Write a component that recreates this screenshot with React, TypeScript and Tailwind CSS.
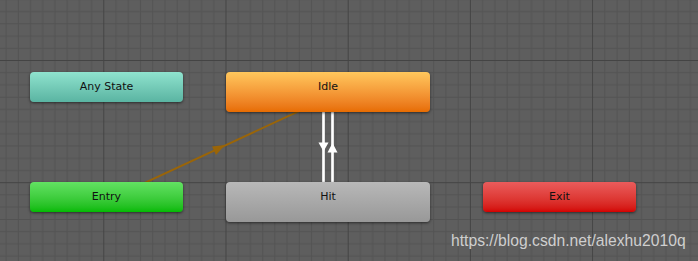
import React from 'react';

interface StateNode {
    name: string;
    left: string;
    top: string;
    size: string;
    colors: string;
}

const nodes: StateNode[] = [
    { name: 'Any State', left: 'left-[30px]', top: 'top-[72px]', size: 'w-[153px] h-[30px]', colors: 'from-[#8fe3ce] to-[#5ab4a2]' },
    { name: 'Idle', left: 'left-[226px]', top: 'top-[72px]', size: 'w-[204px] h-[40px]', colors: 'from-[#ffc75c] to-[#e76c00]' },
    { name: 'Entry', left: 'left-[30px]', top: 'top-[182px]', size: 'w-[153px] h-[30px]', colors: 'from-[#62e262] to-[#00ba00]' },
    { name: 'Hit', left: 'left-[226px]', top: 'top-[182px]', size: 'w-[204px] h-[40px]', colors: 'from-[#b8b8b8] to-[#989898]' },
    { name: 'Exit', left: 'left-[483px]', top: 'top-[182px]', size: 'w-[153px] h-[30px]', colors: 'from-[#ea5b5b] to-[#d30000]' },
];

// background grid + transition arrows
const Graph = () => {
    const minor = [];
    for (let i = 0; i < 10; i++) minor.push(i * 12.22);
    return (
        <svg width="698" height="261" className="absolute inset-0">
            <defs>
                <pattern id="grid" patternUnits="userSpaceOnUse" width="122.2" height="122.2" x="-18.9" y="-62.2">
                    {minor.map((p, i) => (
                        <g key={i}>
                            <line x1={p + 0.5} y1="0" x2={p + 0.5} y2="122.2" stroke="#535353" strokeWidth="1" />
                            <line x1="0" y1={p + 0.5} x2="122.2" y2={p + 0.5} stroke="#535353" strokeWidth="1" />
                        </g>
                    ))}
                    <line x1="0.5" y1="0" x2="0.5" y2="122.2" stroke="#444444" strokeWidth="1" />
                    <line x1="0" y1="0.5" x2="122.2" y2="0.5" stroke="#444444" strokeWidth="1" />
                </pattern>
            </defs>
            <rect width="698" height="261" fill="#5e5e5e" />
            <rect width="698" height="261" fill="url(#grid)" shapeRendering="crispEdges" />

            {/* Entry -> Idle */}
            <line x1="120" y1="194.3" x2="320" y2="101.3" stroke="#9a6508" strokeWidth="2" />
            <polygon points="225,145 212,146.5 216,155" fill="#9a6508" />

            {/* Idle <-> Hit */}
            <line x1="323.5" y1="112" x2="323.5" y2="182" stroke="#d8d8d8" strokeWidth="3" />
            <line x1="323.5" y1="112" x2="323.5" y2="182" stroke="#ffffff" strokeWidth="1.6" />
            <line x1="332.5" y1="112" x2="332.5" y2="182" stroke="#d8d8d8" strokeWidth="3" />
            <line x1="332.5" y1="112" x2="332.5" y2="182" stroke="#ffffff" strokeWidth="1.6" />
            <polygon points="318.5,142.5 328.5,142.5 323.5,151.5" fill="#ffffff" />
            <polygon points="327.5,152.5 337.5,152.5 332.5,143" fill="#ffffff" />
        </svg>
    );
};

const App: React.FC = () => {
    return (
        <div className="relative w-[698px] h-[261px] overflow-hidden bg-[#5e5e5e]">
            <Graph />
            {nodes.map((n) => (
                <div
                    key={n.name}
                    className={`absolute ${n.left} ${n.top} ${n.size} rounded-[4px] bg-linear-to-b ${n.colors} shadow-[0_1px_3px_rgba(0,0,0,0.55)]`}
                >
                    <div className="h-[30px] pt-[1px] flex items-center justify-center font-['DejaVu_Sans',sans-serif] text-[11px] text-[#111111]">
                        {n.name}
                    </div>
                </div>
            ))}
            <div className="absolute left-[451px] top-[233px] leading-[16px] font-['Liberation_Sans',Arial,sans-serif] text-[15.7px] text-[#cfcfcf] whitespace-nowrap">
                https://blog.csdn.net/alexhu2010q
            </div>
        </div>
    );
};

export default App;
